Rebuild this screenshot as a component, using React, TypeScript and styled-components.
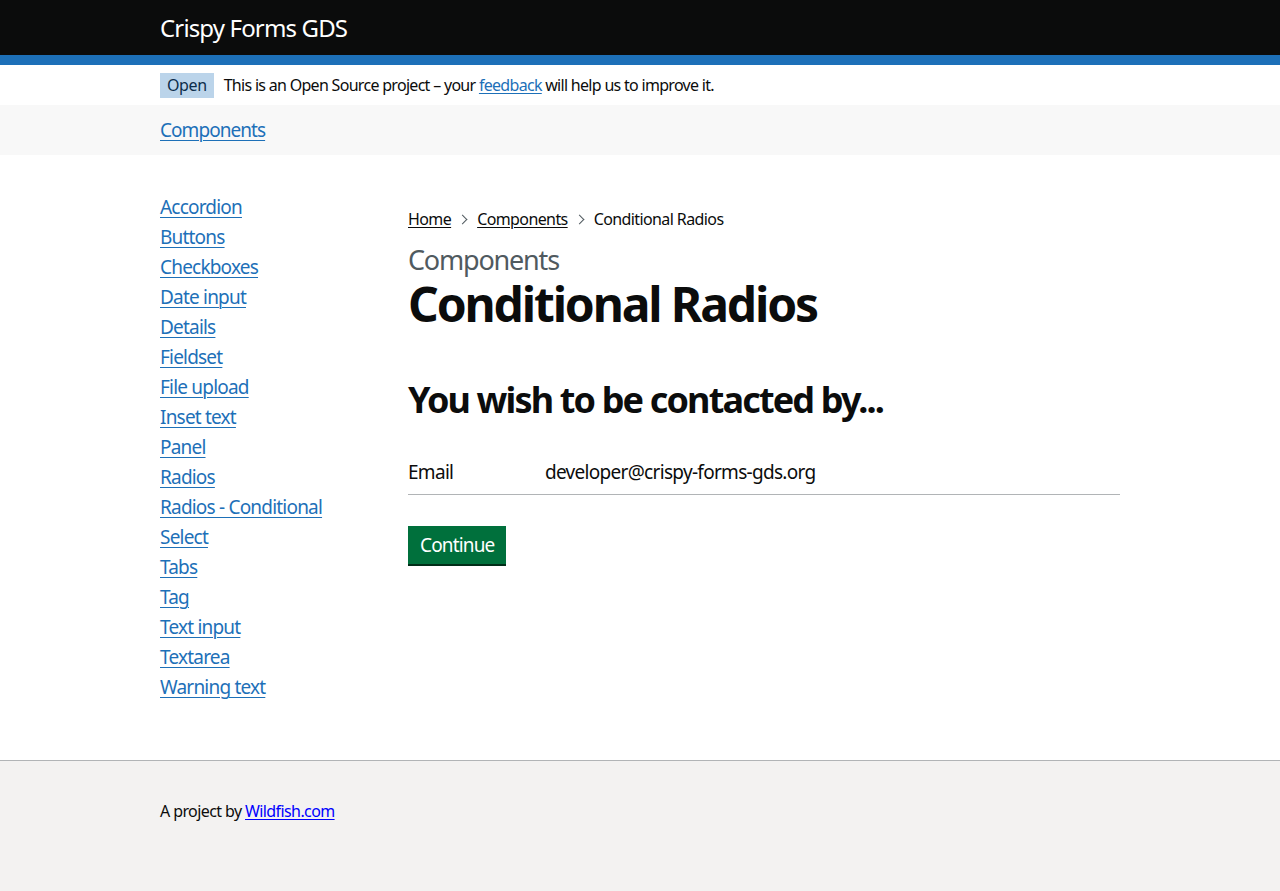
import React from 'react';
import styled, { createGlobalStyle } from 'styled-components';

const GlobalStyle = createGlobalStyle`
  html, body {
    margin: 0;
    padding: 0;
    background: #ffffff;
    font-family: "Noto Sans", "Liberation Sans", sans-serif;
    color: #0b0c0c;
  }
`;

const Width = styled.div`
  width: 960px;
  margin: 0 auto;
`;

const Header = styled.header`
  background: #0b0c0c;
  border-bottom: 10px solid #1d70b8;
  height: 55px;
  display: flex;
  align-items: center;
`;

const ServiceName = styled.a`
  color: #ffffff;
  font-size: 24px;
  text-decoration: none;
  letter-spacing: -0.85px;
`;

const PhaseBanner = styled.div`
  height: 40px;
  display: flex;
  align-items: center;
`;

const PhaseRow = styled(Width)`
  display: flex;
  align-items: center;
  gap: 10px;
  font-size: 16px;
  letter-spacing: -0.7px;
`;

const Tag = styled.strong`
  background: #bbd4ea;
  color: #0c2d4a;
  font-weight: 400;
  height: 25px;
  padding: 0 7px;
  display: flex;
  align-items: center;
  letter-spacing: -0.4px;
`;

const Link = styled.a`
  color: #1d70b8;
  text-decoration: underline;
  text-underline-offset: 0.15em;
  text-decoration-thickness: 1px;
`;

const NavStrip = styled.nav`
  background: #f8f8f8;
  height: 50px;
  display: flex;
  align-items: center;
  font-size: 19px;
  letter-spacing: -0.95px;
`;

const Main = styled(Width)`
  display: grid;
  grid-template-columns: 248px 1fr;
  padding: 40px 0 55px;
`;

const SideList = styled.ul`
  list-style: none;
  margin: 0;
  padding: 0;
  font-size: 19px;
  letter-spacing: -0.8px;
  display: flex;
  flex-direction: column;
`;

const SideItem = styled.li`
  height: 30px;
  line-height: 25px;
`;

const Content = styled.div`
  padding-top: 14px;
`;

const Breadcrumbs = styled.ol`
  list-style: none;
  margin: 0;
  padding: 0;
  display: flex;
  align-items: center;
  font-size: 16px;
  letter-spacing: -0.6px;
  height: 20px;
`;

const Crumb = styled.li`
  display: flex;
  align-items: center;
`;

const CrumbLink = styled.a`
  color: #0b0c0c;
  text-decoration: underline;
  text-underline-offset: 0.15em;
  text-decoration-thickness: 1px;
`;

const Chevron = styled.span`
  display: inline-block;
  width: 6px;
  height: 6px;
  border-top: 1px solid #505a5f;
  border-right: 1px solid #505a5f;
  transform: rotate(45deg);
  margin: 0 11px 0 8px;
`;

const Caption = styled.span`
  display: block;
  color: #505a5f;
  font-size: 27px;
  letter-spacing: -1.2px;
  margin-top: 15px;
  line-height: 32px;
`;

const Title = styled.h1`
  margin: 0;
  font-size: 48px;
  font-weight: 700;
  letter-spacing: -2.15px;
  line-height: 56px;
`;

const Heading = styled.h2`
  margin: 46px 0 0;
  font-size: 36px;
  font-weight: 700;
  letter-spacing: -1.85px;
  line-height: 44px;
`;

const Summary = styled.dl`
  margin: 38px 0 0;
  display: grid;
  grid-template-columns: 137px 1fr;
  border-bottom: 1px solid #b1b4b6;
  padding-bottom: 9px;
  font-size: 19px;
  letter-spacing: -0.7px;
  line-height: 25px;
`;

const Key = styled.dt`
  margin: 0;
`;

const Value = styled.dd`
  margin: 0;
`;

const Button = styled.button`
  margin-top: 31px;
  background: #00703c;
  color: #ffffff;
  border: none;
  box-shadow: 0 2px 0 #002d18;
  font-family: inherit;
  font-size: 19px;
  letter-spacing: -0.85px;
  height: 38px;
  padding: 0 12px;
  cursor: pointer;
`;

const Footer = styled.footer`
  background: #f3f2f1;
  border-top: 1px solid #b1b4b6;
  height: 131px;
  box-sizing: border-box;
  padding-top: 40px;
  font-size: 16px;
  line-height: 20px;
  letter-spacing: -0.6px;
`;

const FooterLink = styled.a`
  color: #0000ff;
  text-decoration: underline;
  text-underline-offset: 0.15em;
`;

const components = [
  'Accordion',
  'Buttons',
  'Checkboxes',
  'Date input',
  'Details',
  'Fieldset',
  'File upload',
  'Inset text',
  'Panel',
  'Radios',
  'Radios - Conditional',
  'Select',
  'Tabs',
  'Tag',
  'Text input',
  'Textarea',
  'Warning text',
];

const App: React.FC = () => {
  return (
    <>
      <GlobalStyle />
      <Header>
        <Width>
          <ServiceName href="#">Crispy Forms GDS</ServiceName>
        </Width>
      </Header>
      <PhaseBanner>
        <PhaseRow>
          <Tag>Open</Tag>
          <span>
            This is an Open Source project – your <Link href="#">feedback</Link> will help us to
            improve it.
          </span>
        </PhaseRow>
      </PhaseBanner>
      <NavStrip>
        <Width>
          <Link href="#">Components</Link>
        </Width>
      </NavStrip>
      <Main>
        <SideList>
          {components.map((name) => (
            <SideItem key={name}>
              <Link href="#">{name}</Link>
            </SideItem>
          ))}
        </SideList>
        <Content>
          <Breadcrumbs>
            <Crumb>
              <CrumbLink href="#">Home</CrumbLink>
              <Chevron />
            </Crumb>
            <Crumb>
              <CrumbLink href="#">Components</CrumbLink>
              <Chevron />
            </Crumb>
            <Crumb>Conditional Radios</Crumb>
          </Breadcrumbs>
          <Caption>Components</Caption>
          <Title>Conditional Radios</Title>
          <Heading>You wish to be contacted by...</Heading>
          <Summary>
            <Key>Email</Key>
            <Value>developer@crispy-forms-gds.org</Value>
          </Summary>
          <Button>Continue</Button>
        </Content>
      </Main>
      <Footer>
        <Width>
          A project by <FooterLink href="#">Wildfish.com</FooterLink>
        </Width>
      </Footer>
    </>
  );
};

export default App;
